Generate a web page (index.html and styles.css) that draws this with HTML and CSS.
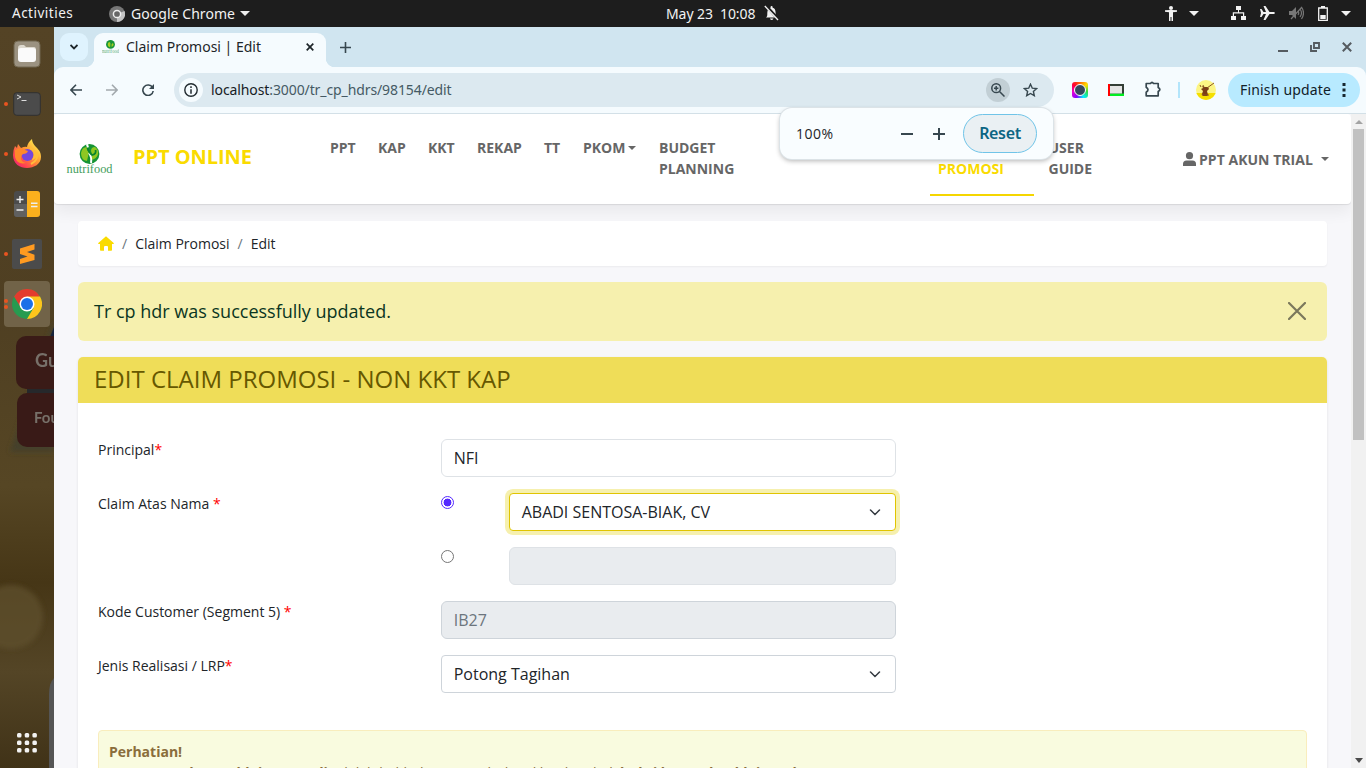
FILE: index.html
```html
<!DOCTYPE html>
<html lang="id">
<head>
<meta charset="utf-8">
<title>Claim Promosi | Edit</title>
<link rel="stylesheet" href="styles.css">
</head>
<body>
<div class="desktop">
  <header class="topbar">
    <span class="activities">Activities</span>
    <svg class="top-chrome" width="16" height="16" viewBox="0 0 16 16"><circle cx="8" cy="8" r="8" fill="#777"/><path d="M8 8 15.500 5A8 8 0 0 1 8 16z" fill="#c2c2c2"/><circle cx="8" cy="8" r="3.600" fill="#666" stroke="#eee" stroke-width="1.500"/></svg>
    <span class="appname">Google Chrome</span>
    <svg class="app-caret" width="10" height="5"><path d="M0 0h10L5 5z" fill="#eee"/></svg>
    <span class="clock">May 23&nbsp; 10:08</span>
    <svg class="bell" width="15" height="16" viewBox="0 0 15 16"><path d="M2 12.500c1.400-1 1.300-2 1.300-4.500C3.300 4.500 5 3 6.600 2.700V2a1 1 0 0 1 2 0v.7c2 .4 3 2 3 5.300 0 2.500.2 3.500 1.700 4.500zM6 13.500h3.400a1.700 1.400 0 0 1-3.400 0z" fill="#f2f2f2"/><path d="M1.800.6 14.500 14.400" stroke="#1d1d1d" stroke-width="3"/><path d="M.8 1 14 15" stroke="#f2f2f2" stroke-width="1.300"/></svg>
    <div class="tray">
      <svg width="12" height="15" viewBox="0 0 12 15" fill="#f2f2f2"><circle cx="6" cy="2" r="2"/><path d="M0 4.200 5 4h2l5 .2v1.600L8 6.300V15H6.500v-4h-1v4H4V6.300L0 5.800z"/></svg>
      <svg class="t1" width="10" height="5"><path d="M0 0h10L5 5z" fill="#f2f2f2"/></svg>
      <svg class="t2" width="15" height="14" viewBox="0 0 15 14" fill="#f2f2f2"><path d="M5 0h5v4H8v2.300h5.200V10H15v4h-5v-4h2V7.500H3V10h2v4H0v-4h1.800V6.300H7V4H5z"/></svg>
      <svg class="t3" width="15" height="14" viewBox="0 0 15 14" fill="#f2f2f2"><path d="M0 3h1.500l2 3H6L3.500 0H5.500l4 6h3.200c1.500 0 2.300.6 2.300 1s-.8 1-2.300 1H9.500l-4 6h-2L6 8H3.500l-2 3H0l1-4z"/></svg>
      <svg class="t3" width="15" height="14" viewBox="0 0 15 14"><path d="M0 5h3l4-4v12L3 9H0z" fill="#777"/><path d="M9 5q1.500 2 0 4M11 3q3 4 0 8M12.500 1q4 6 0 12M13 1 2 13" fill="none" stroke="#777" stroke-width="1.200"/></svg>
      <svg class="t4" width="10" height="15" viewBox="0 0 10 15"><path d="M.7 2h8.600v12.300H.7z" fill="none" stroke="#f2f2f2" stroke-width="1.300"/><path d="M3 0h4v2H3zM2.300 9h5.400v4H2.300z" fill="#f2f2f2"/></svg>
      <svg class="t5" width="10" height="5"><path d="M0 0h10L5 5z" fill="#f2f2f2"/></svg>
    </div>
  </header>

  <div class="workspace">
    <aside class="dock">
      <svg class="wallpaper" width="54" height="741" viewBox="0 27 54 741">
        <defs><linearGradient id="w" x2="0" y2="1"><stop offset="0" stop-color="#544325"/><stop offset=".38" stop-color="#4f3f22"/><stop offset=".62" stop-color="#564624"/><stop offset=".75" stop-color="#463616"/><stop offset=".87" stop-color="#544526"/><stop offset="1" stop-color="#403217"/></linearGradient><filter id="b"><feGaussianBlur stdDeviation="2.500"/></filter><filter id="s"><feGaussianBlur stdDeviation=".6"/></filter></defs>
        <path fill="url(#w)" d="M0 27h54v741H0z"/>
        <path d="M54 320 10 452h44z" fill="#44402a" filter="url(#b)"/>
        <circle cx="11" cy="617" r="32" fill="#61512f" opacity=".7" filter="url(#b)"/>
        <path d="M54 327v12l-4-2z" fill="#17243d"/><path d="M27 389h27v4H27z" fill="#26282b"/>
        <rect x="16" y="336" width="50" height="53" rx="10" fill="#3a1b17"/><rect x="17" y="393" width="50" height="54" rx="10" fill="#391a17"/>
        <g filter="url(#s)" font-family="Lato" font-weight="700" fill="#777069"><text x="35" y="367" font-size="18">Gu</text><text x="34" y="423" font-size="15">Fou</text></g>
        <path d="M54 678q-5 5-5 16v74h5z" fill="#555"/>
      </svg>
      <div class="dock-item"><svg width="28" height="28" viewBox="0 0 28 28"><rect x="1" y="1" width="26" height="26" rx="4" fill="#9b9281" stroke="#716750"/><path d="M5 8q0-3 3-3h3l2 2h8q2 0 2 3v3H5z" fill="#ddd9cf"/><rect x="5" y="8" width="18" height="14" rx="3" fill="#fafafa"/></svg></div>
      <div class="dock-item run"><svg width="28" height="24" viewBox="0 0 28 24"><rect x=".7" y=".7" width="26.600" height="22.600" rx="3" fill="#4b4b4b" stroke="#303030"/><path d="m4 3 4 2-4 2M8.500 8.500h5" stroke="#ddd" fill="none"/></svg></div>
      <div class="dock-item run"><svg width="30" height="30" viewBox="0 0 30 30"><defs><linearGradient id="f" x1="1" x2="0" y2="1"><stop offset=".1" stop-color="#fff44f"/><stop offset=".45" stop-color="#ff9633"/><stop offset=".75" stop-color="#ff4250"/><stop offset="1" stop-color="#e31587"/></linearGradient></defs><path d="M3 7 5 9l1-4 3 4q4-2 6-1 1-5 5-8 0 4 4 8c3 3 5 5 5 10C29 25 22 29 15 29S1 25 1 16Q1 11 3 7z" fill="url(#f)"/><circle cx="15.500" cy="16" r="6" fill="#7547dc"/><path d="M3 11q5-3 10 0l3 1q-1 3-5 3-2 1-2 4 0 4 5 5-9 2-11-6z" fill="#ff8a2a"/><path d="M18 9q7 3 4 10 3-2 3-6 2 8-6 12" fill="none" stroke="#ffbd3a" stroke-width="2"/></svg></div>
      <div class="dock-item"><svg width="28" height="28" viewBox="0 0 28 28"><rect x="1" y="1" width="26" height="26" rx="3" fill="#4b4b4b"/><path d="M1 14h13v13H4q-3 0-3-3z" fill="#606060"/><path d="M14 1h10q3 0 3 3v20q0 3-3 3H14z" fill="#fbb01d"/><path d="M7 6v7M3.500 9.500h7M3.500 20h7M18 13.300h6.500M18 16.500h6.500" stroke="#eee" stroke-width="1.400"/></svg></div>
      <div class="dock-item run"><svg width="30" height="30" viewBox="0 0 30 30"><rect width="30" height="30" rx="2" fill="#4b4b4b"/><path d="M8 9.500 22.500 5v5.500L15 13l7.500 2.800V21L8 25v-5l7.500-2.500L8 15z" fill="#ff9a20"/></svg></div>
      <div class="dock-item run2 active"><svg width="30" height="30" viewBox="0 0 30 30"><circle cx="15" cy="15" r="15" fill="#269b50"/><path d="M2 7.500A15 15 0 0 1 28 7.500L15 10 8.500 18z" fill="#e33b2e"/><path d="M15 7.500h13A15 15 0 0 1 15 30l6.500-11z" fill="#fcc51c"/><circle cx="15" cy="15" r="7.500" fill="#fff"/><circle cx="15" cy="15" r="6" fill="#1b70e8"/></svg></div>
      <svg class="apps" width="20" height="20" viewBox="0 0 20 20" fill="#f2f2f2"><rect x="0" y="0" width="4.500" height="4.500" rx="1.500"/><rect x="7.700" y="0" width="4.500" height="4.500" rx="1.500"/><rect x="15.400" y="0" width="4.500" height="4.500" rx="1.500"/><rect x="0" y="7.500" width="4.500" height="4.500" rx="1.500"/><rect x="7.700" y="7.500" width="4.500" height="4.500" rx="1.500"/><rect x="15.400" y="7.500" width="4.500" height="4.500" rx="1.500"/><rect x="0" y="15" width="4.500" height="4.500" rx="1.500"/><rect x="7.700" y="15" width="4.500" height="4.500" rx="1.500"/><rect x="15.400" y="15" width="4.500" height="4.500" rx="1.500"/></svg>
    </aside>

    <main class="browser">
      <div class="tabstrip">
        <div class="tabsearch"><svg width="8" height="6"><path d="m.5 1 3.500 3.500L7.500 1" fill="none" stroke="#1d2529" stroke-width="1.800"/></svg></div>
        <div class="tab">
          <svg width="17" height="16" viewBox="0 0 46 40"><circle cx="23" cy="13" r="12" fill="#16943a"/><path d="M16 10q5-7 7 1l-1 10q-8-2-6-11zm10 10q-2-8 3-11 6 6-3 11z" fill="#a4ce23"/><text x="0" y="37" font-family="Liberation Serif" font-size="14" textLength="46" lengthAdjust="spacingAndGlyphs" fill="#5fae78">nutrifood</text></svg>
          <span class="tabtitle">Claim Promosi | Edit</span>
          <svg class="tabclose" width="8" height="8"><path d="m.7.7 6.600 6.600m0-6.600L.7 7.300" stroke="#1d2529" stroke-width="1.700"/></svg>
        </div>
        <svg class="newtab" width="11" height="11"><path d="M5.500 0v11M0 5.500h11" stroke="#37474f" stroke-width="1.600"/></svg>
        <div class="winbtns">
          <svg width="10" height="2"><path d="M0 0h10v2H0z" fill="#555b60"/></svg>
          <svg width="10" height="10"><path d="M4 1h5v5H4zM1 3v6h6" fill="none" stroke="#555b60" stroke-width="1.900"/></svg>
          <svg width="10" height="10"><path d="m.8.8 8.400 8.400m0-8.400L.8 9.200" stroke="#555b60" stroke-width="2"/></svg>
        </div>
      </div>

      <div class="toolbar">
        <div class="navbtns">
          <svg width="12" height="12" viewBox="0 0 12 12"><path d="M6 .7.900 6 6 11.300M1 6h11" fill="none" stroke="#37474f" stroke-width="1.600"/></svg>
          <svg width="12" height="12" viewBox="0 0 12 12"><path d="M6 .7 11.100 6 6 11.300M11 6H0" fill="none" stroke="#a2a9ad" stroke-width="1.600"/></svg>
          <svg width="12" height="12" viewBox="0 0 12 12"><path d="M10.500 3.500A5.200 5.200 0 1 0 11.200 7" fill="none" stroke="#37474f" stroke-width="1.600"/><path d="M12 0v5H7z" fill="#37474f"/></svg>
        </div>
        <div class="omnibox">
          <span class="info"><svg width="14" height="14"><circle cx="7" cy="7" r="6.200" fill="none" stroke="#222b30" stroke-width="1.400"/><path d="M7 6.200v4.500M7 3.300v1.600" stroke="#222b30" stroke-width="1.500"/></svg></span>
          <span class="url"><b>localhost</b>:3000/tr_cp_hdrs/98154/edit</span>
          <span class="zoomicon"><svg width="14" height="14" viewBox="0 0 14 14" fill="none" stroke="#37474f" stroke-width="1.500"><circle cx="5.200" cy="5.200" r="4.400"/><path d="m8.500 8.500 5 5M5.200 3v4.400M3 5.200h4.400"/></svg></span>
          <svg class="star" width="15" height="14" viewBox="0 0 15 14"><path d="m7.500 1.200 1.800 4 4.300.4-3.200 2.900.9 4.200-3.800-2.200-3.800 2.200.9-4.200-3.200-2.900 4.300-.4z" fill="none" stroke="#37474f" stroke-width="1.400"/></svg>
        </div>
        <span class="lens"><i></i></span>
        <svg class="ext2" width="16" height="12"><path d="M0 0h16v12H0z" fill="#333e36"/><path d="M0 0h2v12H0z" fill="#f00"/><path d="M2 9.500h14V12H2z" fill="#0e2"/><path d="M2 2h12v7.500H2z" fill="#e4e4e4"/></svg>
        <svg class="puzzle" width="17" height="16" viewBox="0 0 17 16"><path d="M1.200 2.500h4.300Q7 .2 8.500 2.500h4.700v4q3.300 2 0 4v4.300h-12v-3.600q3.600-2.500 0-4.900z" fill="none" stroke="#37474f" stroke-width="1.700" stroke-linejoin="round"/></svg>
        <i class="divider"></i>
        <svg class="avatar" width="20" height="20" viewBox="0 0 20 20"><defs><clipPath id="av"><circle cx="10" cy="10" r="10"/></clipPath></defs><g clip-path="url(#av)"><path d="M0 0h20v20H0z" fill="#fcf584"/><path d="M0 13h20v7H0z" fill="#f5df00"/></g><path d="m6 6 3 1 3 0 1 2-2 2 1 4-1 1H7l-1-2 1-3-2-2 2-1z" fill="#7b3d16"/><path d="m11 8 7-5M5 7 4 5m4 3L7 5m0 8-1 2h7" stroke="#8c5620" fill="none"/></svg>
        <div class="update"><span>Finish update</span><svg width="4" height="14"><path d="M.5 0h3v3h-3zm0 5.500h3v3h-3zm0 5.500h3v3h-3z" fill="#17272f"/></svg></div>
      </div>

      <div class="page">
        <div class="content">
          <nav class="navbar">
            <svg class="logo" width="47" height="32" viewBox="0 0 47 32"><circle cx="23.500" cy="11" r="9.900" fill="#169434"/><path d="M15 10q1-6 6-6-1 3 2 5l-2 9q-6-1-6-8zm10 7q2-5 0-9 0-4 4-4 4 3 3 7-1 5-7 6z" fill="#8fc722"/><path d="M21.500 1q-1 2 1 3M25 20q1-6-2-10" fill="none" stroke="#fff" stroke-width="2"/><path d="M21.500 5q2 6 5 7 4-1 3-5" fill="none" stroke="#0a832e" stroke-width="1.800"/><text x=".5" y="30" font-family="Liberation Serif" font-size="12.500" font-weight="400" textLength="46" lengthAdjust="spacingAndGlyphs" fill="#459e60">nutrifood</text></svg>
            <span class="brand">PPT ONLINE</span>
            <div class="menu">
              <span class="m-ppt">PPT</span><span class="m-kap">KAP</span><span class="m-kkt">KKT</span><span class="m-rekap">REKAP</span><span class="m-tt">TT</span><span class="m-pkom">PKOM <i class="caret"></i></span><span class="m-budget">BUDGET<br>PLANNING</span><span class="m-claim">PROMOSI</span><span class="m-guide">USER<br>GUIDE</span>
            </div>
            <div class="user"><svg width="13" height="14" viewBox="0 0 13 14" fill="#666"><circle cx="6.500" cy="3.700" r="3.600"/><path d="M0 14v-2q0-3.500 3.500-3.500h6Q13 8.500 13 12v2z"/></svg>PPT AKUN TRIAL<i class="caret"></i></div>
          </nav>

          <div class="container">
            <div class="crumbs"><svg width="16" height="15" viewBox="0 0 16 15"><path d="M8 .2 15.700 7q.5.8-.4 1H14v6q0 .8-.8.8H10V11q0-1-1-1H7q-1 0-1 1v3.800H2.800Q2 14.800 2 14V8H.7q-.9-.2-.4-1z" fill="#fadb00"/></svg><i>/</i><span>Claim Promosi</span><i>/</i><span>Edit</span></div>
            <div class="alert"><span>Tr cp hdr was successfully updated.</span><svg width="18" height="18"><path d="m1 1 16 16M17 1 1 17" stroke="#7b785c" stroke-width="2.200" stroke-linecap="round"/></svg></div>
            <section class="card">
              <h1 class="cardhead">EDIT CLAIM PROMOSI - NON KKT KAP</h1>
              <div class="cardbody">
                <div class="row"><label>Principal<em>*</em></label><div class="field">NFI</div></div>
                <div class="row"><label>Claim Atas Nama <em>*</em></label><div class="pick"><i class="radio on"></i><div class="field select focus"><span>ABADI SENTOSA-BIAK, CV</span><svg width="12" height="7"><path d="m1.500 1 4.500 4.500L10.500 1" fill="none" stroke="#343a40" stroke-width="1.500" stroke-linecap="round"/></svg></div></div></div>
                <div class="row"><label></label><div class="pick"><i class="radio"></i><div class="field disabled"></div></div></div>
                <div class="row"><label>Kode Customer (Segment 5) <em>*</em></label><div class="field disabled dark">IB27</div></div>
                <div class="row"><label>Jenis Realisasi / LRP<em>*</em></label><div class="field select dark"><span>Potong Tagihan</span><svg width="12" height="7"><path d="m1.500 1 4.500 4.500L10.500 1" fill="none" stroke="#343a40" stroke-width="1.500" stroke-linecap="round"/></svg></div></div>
                <div class="notice"><b>Perhatian!</b><br><b>Customer, dan no klaim area di</b> adalah hal-hal yang wajib diisi; lihat kembali <b>bukti bayar dan klaim toko</b></div>
              </div>
            </section>
          </div>
        </div>
        <div class="scrollbar"><svg width="8" height="5"><path d="M4 0 8 4H0z" fill="#a3a3a3"/></svg><i></i><svg class="down" width="8" height="5"><path d="M0 0h8L4 5z" fill="#4a4a4a"/></svg></div>
      </div>

      <div class="zoompop"><span>100%</span><svg width="12" height="12"><path d="M0 6h12" stroke="#37474f" stroke-width="2"/></svg><svg width="12" height="12"><path d="M0 6h12M6 0v12" stroke="#37474f" stroke-width="2"/></svg><span class="reset">Reset</span></div>
    </main>
  </div>
</div>
</body>
</html>
```

FILE: styles.css
```css
* { box-sizing: border-box; }
body { margin: 0; overflow: hidden; font-family: "Open Sans", sans-serif; }
svg { display: block; flex: none; }
i, em { font-style: normal; }
.desktop { width: 1366px; height: 768px; display: flex; flex-direction: column; overflow: hidden; }

.topbar { height: 27px; flex: none; background: #1d1d1d; color: #f2f2f2; display: flex; align-items: center; padding-left: 12px; font: 14px/27px "Noto Sans", sans-serif; white-space: nowrap; }
.topbar span { margin-top: -1px; }
.activities { width: 97px; letter-spacing: .5px; font-size: 13.500px; }
.topbar .appname { width: 105px; margin-left: 6px; letter-spacing: .05px; }
.app-caret { margin-left: 4px; }
.topbar .clock { margin-left: 416px; width: 91px; letter-spacing: -.08px; }
.bell { margin-left: 7px; margin-top: -2px; }
.tray { display: flex; align-items: center; margin-left: 386px; margin-top: -1px; }
.t1 { margin-left: 12px; }
.t2 { margin-left: 32px; }
.t3 { margin-left: 14px; }
.t4 { margin-left: 14px; }
.t5 { margin-left: 13px; }

.workspace { display: flex; height: 741px; }
.dock { width: 54px; flex: none; position: relative; display: flex; flex-direction: column; padding: 4px 4px 15px; gap: 4px; overflow: hidden; }
.wallpaper { position: absolute; left: 0; top: 0; }
.dock-item { position: relative; width: 46px; height: 46px; border-radius: 4px; display: flex; align-items: center; justify-content: center; }
.dock-item.active { background: #716348; }
.run::before, .run2::before { content: ""; position: absolute; left: 0; top: 21px; width: 4px; height: 4px; border-radius: 50%; background: #e95420; }
.run2::before { top: 18px; box-shadow: 0 6px #e95420; }
.apps { position: relative; margin: auto auto 0 13px; }

.browser { flex: 1; position: relative; min-width: 0; display: flex; flex-direction: column; background: #d0e5f0; }
.tabstrip { height: 40px; flex: none; display: flex; align-items: center; padding-left: 6px; }
.tabsearch { width: 28px; height: 28px; border-radius: 9px; background: #dff3fe; display: flex; align-items: center; justify-content: center; }
.tab { align-self: flex-end; position: relative; width: 232px; height: 34px; margin-left: 6px; border-radius: 9px 9px 0 0; background: #f5fbfe; display: flex; align-items: center; padding: 0 12px 7px 8px; }
.tab::before, .tab::after { content: ""; position: absolute; bottom: 0; width: 9px; height: 9px; }
.tab::before { left: -9px; background: radial-gradient(circle at 0 0, #d0e5f0 9px, #f5fbfe 9.500px); }
.tab::after { right: -9px; background: radial-gradient(circle at 100% 0, #d0e5f0 9px, #f5fbfe 9.500px); }
.tabtitle { margin-left: 7px; margin-top: -1px; font: 14px "Noto Sans", sans-serif; letter-spacing: 0; color: #1d2529; white-space: nowrap; }
.tabclose { margin-left: auto; }
.newtab { margin-left: 14px; }
.winbtns { margin-left: auto; display: flex; gap: 22px; align-items: center; padding-right: 14px; }
.winbtns svg:first-child { align-self: flex-end; }

.toolbar { height: 47px; flex: none; display: flex; align-items: center; background: #f5fbfe; border-bottom: 1px solid #d3e0e7; border-radius: 9px 9px 0 0; padding: 0 6px 0 16px; }
.navbtns { display: flex; gap: 24px; width: 104px; }
.omnibox { width: 880px; height: 34px; border-radius: 17px; background: #dce9f0; display: flex; align-items: center; padding-left: 5px; }
.info { width: 24px; height: 24px; border-radius: 50%; background: #f5fbfe; display: flex; align-items: center; justify-content: center; }
.url { margin-left: 8px; margin-top: -2px; font: 14px "Noto Sans", sans-serif; letter-spacing: -.1px; color: #455a64; white-space: nowrap; }
.url b { font-weight: 400; color: #172024; }
.zoomicon { margin-left: auto; width: 24px; height: 24px; border-radius: 50%; background: #c2cfd5; display: flex; align-items: center; justify-content: center; }
.star { margin: 0 16px 0 13px; }
.lens { width: 16px; height: 16px; margin-left: 18px; border-radius: 3px; background: conic-gradient(#f60,#fd0,#3d4,#0ef,#80f,#e0c,#f03,#f60); display: grid; place-items: center; }
.lens i { width: 12px; height: 12px; border-radius: 50%; background: #34475c; border: 1.500px solid #fff; }
.ext2 { margin-left: 20px; }
.puzzle { margin-left: 21px; margin-top: -2px; }
.divider { width: 2px; height: 16px; background: #b3e5fb; margin-left: 16px; }
.avatar { margin-left: 16px; }
.update { margin-left: auto; width: 132px; height: 34px; border-radius: 17px; background: #b8eaff; color: #102028; display: flex; align-items: center; justify-content: space-between; padding: 0 14px 0 12px; font: 14px "Noto Sans", sans-serif; letter-spacing: .18px; }
.update span { margin-top: -2px; }

.page { flex: 1; min-height: 0; display: flex; overflow: hidden; background: #f7f7fa; }
.content { width: 1297px; }
.navbar { height: 90px; background: #fff; border-radius: 4px; box-shadow: 0 1px 1px rgba(0,0,0,.09), 0 8px 16px rgba(0,0,0,.06); display: flex; align-items: center; color: #666; font-weight: 700; font-size: 14px; line-height: 21px; white-space: nowrap; }
.logo { margin-left: 12px; }
.brand { margin-left: 20px; width: 197px; color: #fadb00; font-size: 20px; margin-top: -6px; letter-spacing: -.05px; }
.menu { display: flex; align-self: stretch; width: 853px; padding-top: 23px; }
.m-ppt { width: 48px; }
.m-kap { width: 50px; }
.m-kkt { width: 49px; }
.m-rekap { width: 67px; }
.m-tt { width: 39px; }
.m-pkom { width: 76px; }
.m-budget { width: 271px; }
.m-claim { width: 104px; height: 59px; padding: 21px 8px 0; border-bottom: 2px solid #f5d600; color: #fadb00; }
.m-guide { margin-left: 14.500px; }
.caret { display: inline-block; border: 4px solid transparent; border-top-color: currentColor; border-bottom: 0; vertical-align: 3px; margin-left: -1px; }
.user { display: flex; align-items: center; gap: 3px; letter-spacing: .03px; }
.user .caret { margin-left: 5px; }

.container { padding: 17px 24px 0; }
.crumbs { height: 45px; background: #fff; border-radius: 4px; box-shadow: 0 1px 2px rgba(0,0,0,.05); display: flex; align-items: center; gap: 8px; padding-left: 20px; color: #212529; font-size: 14px; }
.crumbs i { color: #6c757d; }
.alert { margin-top: 16px; height: 59px; border-radius: 6px; background: #f6f0ae; color: #0a3622; display: flex; align-items: center; justify-content: space-between; padding: 0 21px 2px 16px; font-size: 18px; }
.card { margin-top: 16px; border-radius: 5px 5px 0 0; background: #fff; box-shadow: 0 1px 3px rgba(0,0,0,.09); overflow: hidden; }
.cardhead { margin: 0; height: 46px; background: #efdd58; color: #665800; font-size: 24px; line-height: 43px; font-weight: 400; padding-left: 16px; }
.cardbody { padding: 36px 20px 20px; }
.row { display: flex; margin-bottom: 16px; }
.row label { width: 343px; font-size: 14px; line-height: 21px; color: #212529; }
em { color: #f00; }
.field { width: 455px; height: 38px; border: 1px solid #dee2e6; border-radius: 6px; background: #fff; padding: 0 11.700px; font-size: 16px; line-height: 36px; color: #212529; }
.dark { border-color: #ced4da; }
.disabled { background: #e9ecef; color: #6c757d; }
.select { border-radius: 4px; display: flex; align-items: center; justify-content: space-between; padding-right: 14px; }
.pick { display: flex; width: 455px; }
.pick .field { width: 387px; margin-left: auto; }
.focus { border-color: #e0c400; box-shadow: 0 0 0 4px #f6f0ae; }
.radio { width: 13px; height: 13px; margin-top: 3px; border-radius: 50%; border: 1px solid #767676; background: #fff; }
.radio.on { border: 1.500px solid #5429ff; background: radial-gradient(circle, #5429ff 3.700px, #fff 4.200px); }
.notice { margin-top: 37px; height: 130px; border: 1px solid #f9edbd; border-radius: 4px; background: #f9fbdf; padding: 10px; color: #8a6d3b; font-size: 14px; line-height: 21px; }

.scrollbar { width: 15px; background: #f1f1f1; display: flex; flex-direction: column; align-items: center; padding: 6px 0 5px; }
.scrollbar i { width: 11px; height: 311px; background: #c1c1c1; margin-top: 4px; }
.down { margin-top: auto; }

.zoompop { position: absolute; left: 726px; top: 81px; width: 273px; height: 51px; border-radius: 12px; background: #f9fdff; box-shadow: 0 0 0 1px #dce3e7, 0 2px 5px rgba(0,0,0,.3); display: flex; align-items: center; padding-left: 16px; font-size: 14px; color: #1d2529; }
.zoompop > span:first-child { width: 105px; letter-spacing: .5px; margin-top: -1px; }
.zoompop svg + svg { margin-left: 20px; }
.reset { width: 74px; height: 39px; margin-left: 18px; border: 1px solid #70c4e8; border-radius: 20px; background: #eaf0f3; color: #0c6683; font: 600 16px/36px "Noto Sans", sans-serif; letter-spacing: -.35px; text-align: center; }
```
